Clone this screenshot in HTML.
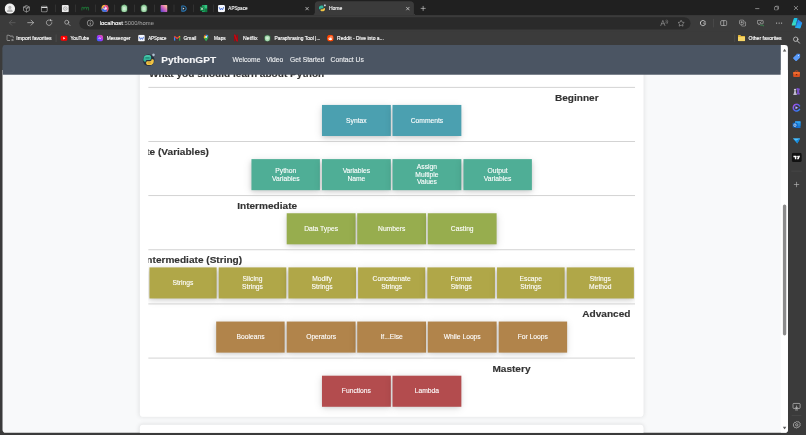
<!DOCTYPE html>
<html><head><meta charset="utf-8"><title>Home</title>
<style>
html,body{margin:0;padding:0;background:#3b3b3b;overflow:hidden;}
body{width:806px;height:435px;position:relative;font-family:"Liberation Sans",sans-serif;}
#w{position:absolute;left:0;top:0;width:1920px;height:1037px;transform:scale(0.41979);transform-origin:0 0;background:#3b3b3b;overflow:hidden;filter:blur(0.55px);}
#w *{box-sizing:border-box;}
.abs{position:absolute;}
/* title bar */
#tb{position:absolute;left:0;top:0;width:1920px;height:36px;background:#202020;}
#tool{position:absolute;left:0;top:35px;width:1920px;height:40px;background:transparent;}
#bm{position:absolute;left:0;top:75px;width:1920px;height:33px;background:#3b3b3b;}
.sep{position:absolute;width:1px;background:#4c4c4c;}
.tabtxt{position:absolute;font-size:12px;color:#f4f4f4;-webkit-text-stroke:0.3px #f4f4f4;white-space:nowrap;line-height:14px;}
.bmt{position:absolute;top:84px;font-size:12px;color:#fff;-webkit-text-stroke:0.35px #fff;white-space:nowrap;line-height:15px;transform-origin:0 50%;}
.ic{position:absolute;}
/* page */
#page{position:absolute;left:6px;top:107px;width:1871px;height:924px;background:linear-gradient(#4b5563 0,#4b5563 60px,#f8f9fa 60px);border-radius:8px;overflow:hidden;}
#nav{position:absolute;left:0;top:0;width:1854px;height:70.5px;background:#4b5563;z-index:5;}
#sb{position:absolute;left:1854px;top:0;width:17px;height:924px;background:#fff;z-index:6;}
.card{position:absolute;left:327px;width:1200px;background:#fff;border-radius:8px;box-shadow:0 0 10px rgba(0,0,0,.1);}
#clip{position:absolute;left:20px;top:0;width:1160px;height:100%;overflow:hidden;}
.hr{position:absolute;left:0;width:1160px;height:2px;background:#cbcbcb;}
.h{position:absolute;font-weight:bold;font-size:22px;color:#333;-webkit-text-stroke:0.35px #333;white-space:nowrap;line-height:28px;transform:scaleX(1.091);transform-origin:0 50%;margin-top:0.6px;}
.b{-webkit-text-stroke:0.25px #fff;position:absolute;height:74.2px;width:163.3px;color:#fff;font-size:16px;line-height:18px;text-align:center;display:flex;align-items:center;justify-content:center;box-shadow:0 4px 10px 0 rgba(0,0,0,.13),0 4px 20px 0 rgba(0,0,0,.12);}
.r4 .b{width:160.7px;}
.navl{-webkit-text-stroke:0.25px #eef0f2;position:absolute;top:25px;font-size:16px;color:#eef0f2;white-space:nowrap;line-height:20px;}
</style></head><body>
<div id="w">
<!-- ===== title bar ===== -->
<div id="tb">
  <!-- avatar -->
  <svg class="ic" style="left:10.5px;top:7.5px" width="25" height="25" viewBox="0 0 24 24"><circle cx="12" cy="12" r="12" fill="#f1f1f1"/><circle cx="12" cy="9.2" r="3.6" fill="#b4b4b4"/><path d="M5.5 18.5c0-3.4 2.9-5 6.500-5s6.500 1.600 6.500 5v1h-13z" fill="#b4b4b4"/></svg>
  <!-- workspaces -->
  <svg class="ic" style="left:53px;top:10.500px" width="20" height="20" viewBox="0 0 20 20" fill="none" stroke="#c4c4c4" stroke-width="1.400" stroke-linejoin="round"><path d="M10 2l7 3.500v8.500l-7 4-7-4V5.500z"/><path d="M3 5.500l7 3.500 7-3.500M10 9v9"/><path d="M6.500 3.800l7 3.500v3" stroke-width="1.100"/></svg>
  <!-- tab actions -->
  <svg class="ic" style="left:96.500px;top:12.500px" width="17" height="17" viewBox="0 0 17 17" fill="none" stroke="#dadada" stroke-width="1.500"><rect x="1.500" y="1.500" width="14" height="14" rx="2.800"/><path d="M1.500 5h14" stroke-width="2.600"/></svg>
  <div class="sep" style="left:132px;top:11px;height:18px"></div>
  <!-- pinned 1 -->
  <svg class="ic" style="left:147px;top:11.500px" width="17" height="17" viewBox="0 0 17 17"><rect width="17" height="17" rx="3" fill="#e9e9e9"/><circle cx="8.500" cy="8.500" r="4.200" fill="none" stroke="#9b9b9b" stroke-width="1.800"/><circle cx="8.500" cy="8.500" r="1.500" fill="#b5b5b5"/></svg>
  <div class="sep" style="left:179.500px;top:11px;height:18px"></div>
  <!-- pinned 2 green glyph -->
  <svg class="ic" style="left:193px;top:14px" width="20" height="12" viewBox="0 0 20 12"><path d="M2 10V5c0-2 3-2.500 4-.5L7 7l1-2.500c1-2 4-2 4.500 0L13 7l1-2.500c1-2 4-1.500 4 .5v5" fill="none" stroke="#1e6b34" stroke-width="2.400" stroke-linecap="round"/></svg>
  <div class="sep" style="left:226.500px;top:11px;height:18px"></div>
  <!-- pinned 3 colourful -->
  <svg class="ic" style="left:241px;top:11px" width="18" height="18" viewBox="0 0 18 18"><circle cx="9" cy="9" r="8.500" fill="#f3b23a"/><path d="M9 .5A8.500 8.500 0 0 1 17.500 9 8.500 8.500 0 0 1 9 17.500z" fill="#e8487f"/><path d="M.5 9A8.500 8.500 0 0 0 9 17.500 8.500 8.500 0 0 0 15 15L9 9z" fill="#3d6fe0"/><circle cx="9.500" cy="8.500" r="3.800" fill="#f6e9f2"/><circle cx="7.500" cy="7" r="2.400" fill="#a04bd6"/></svg>
  <div class="sep" style="left:272.500px;top:11px;height:18px"></div>
  <!-- pinned 4,5 green -->
  <svg class="ic" style="left:286px;top:10px" width="20" height="20" viewBox="0 0 20 20"><rect x="1.500" y=".5" width="17" height="19" rx="7" fill="#3c7e4c" opacity=".5"/><rect x="3.500" y="2" width="13" height="16.500" rx="6" fill="#a5dbae"/><rect x="6.500" y="6.500" width="7" height="8" rx="2.500" fill="#c9ecd0"/><rect x="8" y="1" width="4" height="2.500" rx="1" fill="#7cc58a"/></svg>
  <div class="sep" style="left:320px;top:11px;height:18px"></div>
  <svg class="ic" style="left:333px;top:10px" width="20" height="20" viewBox="0 0 20 20"><rect x="1.500" y=".5" width="17" height="19" rx="7" fill="#3c7e4c" opacity=".5"/><rect x="3.500" y="2" width="13" height="16.500" rx="6" fill="#a5dbae"/><rect x="6.500" y="6.500" width="7" height="8" rx="2.500" fill="#c9ecd0"/><rect x="8" y="1" width="4" height="2.500" rx="1" fill="#7cc58a"/></svg>
  <div class="sep" style="left:367px;top:11px;height:18px"></div>
  <!-- pinned 6 gradient square -->
  <svg class="ic" style="left:381.500px;top:11.500px" width="17" height="17" viewBox="0 0 17 17"><defs><linearGradient id="g6" x1="0" y1="1" x2="1" y2="0"><stop offset="0" stop-color="#3b46c9"/><stop offset=".45" stop-color="#c45ac0"/><stop offset=".75" stop-color="#f3a0a8"/><stop offset="1" stop-color="#f7d27a"/></linearGradient></defs><rect width="17" height="17" rx="2.500" fill="url(#g6)"/></svg>
  <div class="sep" style="left:414px;top:11px;height:18px"></div>
  <!-- pinned 7 D -->
  <svg class="ic" style="left:429px;top:11.500px" width="17" height="17" viewBox="0 0 17 17"><path d="M4 2.500h4.500a6 6 0 0 1 0 12H4z" fill="none" stroke="#2a78b5" stroke-width="2.400" stroke-linejoin="round"/><path d="M6.500 6l4 2.500-4 2.500z" fill="#dff1ff"/></svg>
  <div class="sep" style="left:460.500px;top:11px;height:18px"></div>
  <!-- pinned 8 excel -->
  <svg class="ic" style="left:475.500px;top:11.500px" width="18" height="17" viewBox="0 0 18 17"><rect x="5" y="0" width="13" height="17" rx="1.500" fill="#21a366"/><rect x="11.500" y="0" width="6.500" height="8.500" fill="#33c481"/><rect x="11.500" y="8.500" width="6.500" height="8.500" fill="#107c41"/><rect x="0" y="3.500" width="10.500" height="10.500" rx="1.500" fill="#107c41"/><path d="M3 6l4.500 5.500M7.500 6L3 11.500" stroke="#fff" stroke-width="1.600"/></svg>
  <div class="sep" style="left:508px;top:11px;height:18px"></div>
  <!-- APSpace tab -->
  <svg class="ic" style="left:518.500px;top:11.500px" width="17" height="17" viewBox="0 0 17 17"><rect width="17" height="17" rx="3.500" fill="#f4f6fb"/><path d="M3.500 6l2.500 5.500 2.500-4 2.500 4L13.500 6" fill="none" stroke="#3f6ad8" stroke-width="2.200" stroke-linejoin="round" stroke-linecap="round"/></svg>
  <div class="tabtxt" style="left:544px;top:13.5px;transform:scaleX(.91);transform-origin:0 50%;">APSpace</div>
  <svg class="ic" style="left:726px;top:14.500px" width="11" height="11" viewBox="0 0 11 11"><path d="M1.500 1.500l8 8M9.500 1.500l-8 8" stroke="#f0f0f0" stroke-width="1.500"/></svg>
  <!-- active tab -->
  <div class="abs" style="left:750px;top:3px;width:236px;height:33px;background:#3b3b3b;border-radius:9px 9px 0 0;"></div>
  <div class="abs" style="left:742px;top:28px;width:8px;height:8px;background:radial-gradient(circle at 0 0,transparent 8px,#3b3b3b 8.500px);"></div>
  <div class="abs" style="left:986px;top:28px;width:8px;height:8px;background:radial-gradient(circle at 100% 0,transparent 8px,#3b3b3b 8.500px);"></div>
  <svg class="ic" style="left:756.500px;top:10px" width="20" height="20" viewBox="-2.500 -2.500 34 34"><circle cx="14.500" cy="14.500" r="14" fill="#2b323c" opacity=".7"/><path d="M2 13C2 6 6 2.500 12 2.500h3c3 0 5.500 2 5.500 4.500v4c0 2-1.500 3.500-3.500 3.500h-6c-2 0-3.500 1.500-3.500 3.500v.5H6C3.500 18.500 2 16 2 13z" fill="#35b59a"/><path d="M27 16c0 7-4 10.500-10 10.500h-3c-3 0-5.500-2-5.500-4.500v-1c0-2 1.500-3.500 3.500-3.500h6c2 0 3.500-1.500 3.500-3.500v-1.500H23c2.500 0 4 1 4 3.500z" fill="#f2c545"/><circle cx="26.200" cy="2.200" r="4.200" fill="#c4d0de"/></svg>
  <div class="tabtxt" style="left:783.500px;top:13.5px;color:#f2f2f2">Home</div>
  <svg class="ic" style="left:965.500px;top:14.500px" width="11" height="11" viewBox="0 0 11 11"><path d="M1.500 1.500l8 8M9.500 1.500l-8 8" stroke="#f0f0f0" stroke-width="1.500"/></svg>
  <!-- new tab -->
  <svg class="ic" style="left:1000.500px;top:12.500px" width="14" height="14" viewBox="0 0 14 14"><path d="M7 1v12M1 7h12" stroke="#dcdcdc" stroke-width="1.400"/></svg>
  <!-- window controls -->
  <svg class="ic" style="left:1798px;top:14px" width="12" height="12" viewBox="0 0 12 12"><path d="M1 6.500h10" stroke="#e6e6e6" stroke-width="1.200"/></svg>
  <svg class="ic" style="left:1844px;top:13px" width="12" height="12" viewBox="0 0 12 12" fill="none" stroke="#e6e6e6" stroke-width="1.100"><rect x="1" y="3" width="8" height="8" rx="1.500"/><path d="M3.500 3V2.500A1.500 1.500 0 0 1 5 1h4.500A1.500 1.500 0 0 1 11 2.500V7a1.500 1.500 0 0 1-1.500 1.500H9"/></svg>
  <svg class="ic" style="left:1890px;top:13px" width="12" height="12" viewBox="0 0 12 12"><path d="M1 1l10 10M11 1L1 11" stroke="#e6e6e6" stroke-width="1.200"/></svg>
</div>
<!-- ===== toolbar ===== -->
<div id="tool">
  <svg class="ic" style="left:19.500px;top:10px" width="18" height="18" viewBox="0 0 18 18" fill="none" stroke="#6a6a6a" stroke-width="1.500" stroke-linecap="round" stroke-linejoin="round"><path d="M16 9H2.500M8 3L2 9l6 6"/></svg>
  <svg class="ic" style="left:64px;top:10px" width="18" height="18" viewBox="0 0 18 18" fill="none" stroke="#d8d8d8" stroke-width="1.500" stroke-linecap="round" stroke-linejoin="round"><path d="M2 9h13.500M10 3l6 6-6 6"/></svg>
  <svg class="ic" style="left:107.500px;top:10px" width="18" height="18" viewBox="0 0 18 18" fill="none" stroke="#d8d8d8" stroke-width="1.500" stroke-linecap="round" stroke-linejoin="round"><path d="M15.500 9A6.500 6.500 0 1 1 12.800 3.700"/><path d="M12.500 1v3.500H16" /></svg>
  <svg class="ic" style="left:152px;top:11px" width="17" height="17" viewBox="0 0 17 17" fill="none" stroke="#cfcfcf" stroke-width="1.500" stroke-linecap="round"><circle cx="7" cy="7" r="4.800"/><path d="M10.600 10.600L15 15"/></svg>
  <!-- address pill -->
  <div class="abs" style="left:189px;top:5.500px;width:1456px;height:29.500px;border-radius:15px;background:#2a2a2a;"></div>
  <svg class="ic" style="left:205.500px;top:10.500px" width="18" height="18" viewBox="0 0 18 18" fill="none" stroke="#dcdcdc" stroke-width="1.300"><circle cx="9" cy="9" r="7.200"/><path d="M9 8v5" stroke-width="1.500"/><circle cx="9" cy="5.500" r=".9" fill="#dcdcdc" stroke="none"/></svg>
  <div class="abs" style="left:237.500px;top:11px;font-size:14px;line-height:17px;color:#fff;-webkit-text-stroke:0.3px #fff;white-space:nowrap;">localhost<span style="color:#9a9a9a;-webkit-text-stroke:0.2px #9a9a9a">:5000/home</span></div>
  <!-- read aloud -->
  <svg class="ic" style="left:1572px;top:10px" width="22" height="19" viewBox="0 0 22 19" fill="none" stroke="#a0a0a0" stroke-width="1.400" stroke-linecap="round" stroke-linejoin="round"><path d="M2 16L7 3.500 12 16M3.800 11.500h6.400"/><path d="M14.500 4.500a3.500 3.500 0 0 1 0 5" stroke-width="1.200"/><path d="M17 2.500a6.500 6.500 0 0 1 0 9" stroke-width="1.200"/></svg>
  <!-- star -->
  <svg class="ic" style="left:1613px;top:10.500px" width="19" height="19" viewBox="0 0 20 20" fill="none" stroke="#a8a8a8" stroke-width="1.400" stroke-linejoin="round"><path d="M10 2.200l2.400 5 5.400.7-3.900 3.800.9 5.500L10 14.600l-4.800 2.600.9-5.500L2.200 7.900l5.400-.7z"/></svg>
  <!-- extension / refresh-like -->
  <svg class="ic" style="left:1666px;top:10.500px" width="18" height="18" viewBox="0 0 20 20" fill="none" stroke="#e2e2e2" stroke-width="2.200" stroke-linecap="round"><path d="M15.800 6.500A7 7 0 1 0 16 13"/><path d="M11 10h5.500" stroke-width="2"/></svg>
  <div class="sep" style="left:1699px;top:10px;height:20px;background:#5c5c5c"></div>
  <!-- split screen -->
  <svg class="ic" style="left:1714.500px;top:10.500px" width="18" height="18" viewBox="0 0 20 20" fill="none" stroke="#dedede" stroke-width="1.500"><rect x="2" y="3.500" width="16" height="13" rx="3"/><path d="M10 3.500v13"/></svg>
  <!-- collections -->
  <svg class="ic" style="left:1759.500px;top:10.500px" width="18" height="18" viewBox="0 0 21 21" fill="none" stroke="#dedede" stroke-width="1.400"><rect x="2" y="2" width="12" height="12" rx="3"/><path d="M16.500 6.500a3 3 0 0 1 2.500 3V16a3 3 0 0 1-3 3H9.500a3 3 0 0 1-3-2.500"/><path d="M8 5v6M5 8h6"/></svg>
  <!-- feedback -->
  <svg class="ic" style="left:1802.500px;top:10.500px" width="18" height="18" viewBox="0 0 21 21" fill="none" stroke-width="1.400"><path d="M3 3h13a1.500 1.500 0 0 1 1.500 1.500V11a1.500 1.500 0 0 1-1.500 1.500H9l-3.500 3v-3H3A1.500 1.500 0 0 1 1.500 11V4.500A1.500 1.500 0 0 1 3 3z" stroke="#dedede"/><path d="M7.500 7.500l2 2 3.500-3.500" stroke="#dedede"/><path d="M9.500 16.500h6l3 2.500v-2.500" stroke="#3aa655" stroke-width="1.800"/></svg>
  <!-- dots -->
  <svg class="ic" style="left:1847px;top:17px" width="18" height="6" viewBox="0 0 18 6"><circle cx="3" cy="3" r="1.400" fill="#d0d0d0"/><circle cx="9" cy="3" r="1.400" fill="#d0d0d0"/><circle cx="15" cy="3" r="1.400" fill="#d0d0d0"/></svg>
  <!-- copilot -->
  <svg class="ic" style="left:1884px;top:4.500px" width="29" height="29" viewBox="0 0 29 29"><defs><linearGradient id="cp1" x1="0" y1="0" x2="0" y2="1"><stop offset="0" stop-color="#19c0e8"/><stop offset="1" stop-color="#3fe0b8"/></linearGradient><linearGradient id="cp2" x1="0" y1="0" x2="0" y2="1"><stop offset="0" stop-color="#2a7bf0"/><stop offset="1" stop-color="#22b4f2"/></linearGradient></defs><path d="M17 8l8.500 6.500-4 12-10.500-2z" fill="url(#cp2)" stroke="url(#cp2)" stroke-width="3" stroke-linejoin="round"/><path d="M8.500 4.500h6L10 19.500H3.500z" fill="url(#cp1)" stroke="url(#cp1)" stroke-width="3" stroke-linejoin="round"/><path d="M17 4.500L11.500 23" stroke="#1b4f9c" stroke-width="1.600" stroke-linecap="round"/></svg>
</div>
<!-- ===== bookmarks bar ===== -->
<div id="bm">
  <svg class="ic" style="left:14.500px;top:7px" width="18" height="17" viewBox="0 0 18 17" fill="none" stroke="#d4d4d4" stroke-width="1.400" stroke-linejoin="round"><path d="M1.500 13V3a1.500 1.500 0 0 1 1.500-1.500h3.500L8.500 4H15a1.500 1.500 0 0 1 1.500 1.500V9"/><path d="M1.500 13a1.500 1.500 0 0 0 1.500 1.500h6"/><path d="M11.500 13.500h5M14.500 11l2.500 2.500-2.500 2.500" stroke-width="1.300"/></svg>
</div>
<div class="bmt" style="left:39px;transform:scaleX(1.013);">Import favorites</div>
<div class="sep" style="left:133px;top:82px;height:18px;background:#5c5c5c"></div>
<!-- youtube -->
<svg class="ic" style="left:144px;top:83.500px" width="17" height="14" viewBox="0 0 17 14"><rect x="0" y="1" width="17" height="12" rx="3.500" fill="#f00"/><path d="M6.800 4.200v5.600L11.500 7z" fill="#fff"/></svg>
<div class="bmt" style="left:168.400px;transform:scaleX(0.94);">YouTube</div>
<!-- messenger -->
<svg class="ic" style="left:230px;top:82.500px" width="16" height="16" viewBox="0 0 16 16"><defs><linearGradient id="ms" x1="0" y1="1" x2="1" y2="0"><stop offset="0" stop-color="#0a7cff"/><stop offset=".5" stop-color="#a033ff"/><stop offset="1" stop-color="#ff5c87"/></linearGradient></defs><circle cx="8" cy="8" r="8" fill="url(#ms)"/><path d="M3.500 10l3-4 2 2 3.500-2-3 4-2-2z" fill="#fff"/></svg>
<div class="bmt" style="left:254.200px;transform:scaleX(0.955);">Messenger</div>
<!-- apspace -->
<svg class="ic" style="left:328.500px;top:82.500px" width="16" height="16" viewBox="0 0 17 17"><rect width="17" height="17" rx="3.500" fill="#f4f6fb"/><path d="M3.500 6l2.500 5.500 2.500-4 2.500 4L13.500 6" fill="none" stroke="#3f6ad8" stroke-width="2.200" stroke-linejoin="round" stroke-linecap="round"/></svg>
<div class="bmt" style="left:352.800px;transform:scaleX(0.87);">APSpace</div>
<!-- gmail -->
<svg class="ic" style="left:413.500px;top:84.500px" width="16" height="12" viewBox="0 0 16 12"><path d="M0 1.500V12h3.500V5z" fill="#4285f4"/><path d="M16 1.500V12h-3.500V5z" fill="#34a853"/><path d="M0 1.500C0 0 1.800-.5 3 .5L8 4.500 13 .5c1.200-1 3-.5 3 1L12.500 5 8 8.500 3.500 5z" fill="#ea4335"/><path d="M12.500 5L16 1.500c0-1.500-1.800-2-3-1z" fill="#fbbc04"/></svg>
<div class="bmt" style="left:437.400px;transform:scaleX(0.98);">Gmail</div>
<!-- maps -->
<svg class="ic" style="left:484.500px;top:82px" width="12" height="17" viewBox="0 0 12 17"><path d="M6 0a6 6 0 0 1 6 6c0 3.500-4 6-6 11C4 12 0 9.500 0 6a6 6 0 0 1 6-6z" fill="#34a853"/><path d="M6 0a6 6 0 0 1 5.200 3L6 9z" fill="#4285f4"/><path d="M.8 3A6 6 0 0 1 6 0l-2 6z" fill="#ea4335"/><path d="M0 6c0 1.500.7 2.800 1.600 4L6 6 3 3.500z" fill="#fbbc04"/><circle cx="6" cy="6" r="2.200" fill="#fff"/></svg>
<div class="bmt" style="left:509.500px;transform:scaleX(0.945);">Maps</div>
<!-- netflix -->
<svg class="ic" style="left:557px;top:82px" width="10" height="17" viewBox="0 0 10 17"><path d="M0 0h3.200L10 17H6.800z" fill="#c80812"/><path d="M0 0h3.200v17H0zM6.800 0H10v17H6.800z" fill="#a3060e"/><path d="M0 0h3.200L10 17H6.800z" fill="#c80812"/></svg>
<div class="bmt" style="left:578.600px;transform:scaleX(1.03);">Netflix</div>
<!-- paraphrasing -->
<svg class="ic" style="left:626.500px;top:80.500px" width="20" height="20" viewBox="0 0 20 20"><rect x="2" y="2" width="16" height="16" rx="6" fill="#3c7e4c" opacity=".55"/><rect x="4" y="3.500" width="12" height="13.500" rx="5" fill="#a9dcb2"/><rect x="7" y="7" width="6" height="6" rx="2" fill="#d3f0d8"/></svg>
<div class="bmt" style="left:653.600px;transform:scaleX(0.968);">Paraphrasing Tool |...</div>
<!-- reddit -->
<svg class="ic" style="left:778.500px;top:82.500px" width="16" height="16" viewBox="0 0 16 16"><circle cx="8" cy="8" r="8" fill="#ff4500"/><ellipse cx="8" cy="9.500" rx="4.800" ry="3.300" fill="#fff"/><circle cx="6" cy="9" r=".9" fill="#ff4500"/><circle cx="10" cy="9" r=".9" fill="#ff4500"/><circle cx="12.300" cy="5" r="1.100" fill="#fff"/><path d="M8 6l.8-3 3 .8" stroke="#fff" stroke-width=".8" fill="none"/></svg>
<div class="bmt" style="left:802.500px;transform:scaleX(0.993);">Reddit - Dive into a...</div>
<!-- other favorites -->
<div class="sep" style="left:1750px;top:82px;height:18px;background:#5c5c5c"></div>
<svg class="ic" style="left:1758px;top:83px" width="17" height="15" viewBox="0 0 17 15"><path d="M0 2a1.500 1.500 0 0 1 1.500-1.500h4l2 2H15.500A1.500 1.500 0 0 1 17 4v9.500A1.500 1.500 0 0 1 15.500 15h-14A1.500 1.500 0 0 1 0 13.500z" fill="#e6b93c"/><path d="M0 5h17v8.500a1.500 1.500 0 0 1-1.500 1.500h-14A1.500 1.500 0 0 1 0 13.500z" fill="#f7d667"/></svg>
<div class="bmt" style="left:1783px;">Other favorites</div>
<div id="page">
<div class="card" style="top:31px;height:855px;"><div id="clip">
<div class="h" style="left:2px;top:23.4px;">What you should learn about Python</div>
<div class="hr" style="top:69.2px"></div>
<div class="h" style="left:968.8px;top:80.1px;">Beginner</div>
<div class="row">
<div class="b" style="left:414.30px;top:111.9px;background:#4ba0b0">Syntax</div>
<div class="b" style="left:582.40px;top:111.9px;background:#4ba0b0">Comments</div>
</div>
<div class="hr" style="top:198.2px"></div>
<div class="h" style="left:-126.0px;top:209.1px;">Intermediate (Variables)</div>
<div class="row">
<div class="b" style="left:246.20px;top:240.9px;background:#4fae96">Python<br>Variables</div>
<div class="b" style="left:414.30px;top:240.9px;background:#4fae96">Variables<br>Name</div>
<div class="b" style="left:582.40px;top:240.9px;background:#4fae96">Assign<br>Multiple<br>Values</div>
<div class="b" style="left:750.50px;top:240.9px;background:#4fae96">Output<br>Variables</div>
</div>
<div class="hr" style="top:327.2px"></div>
<div class="h" style="left:212.3px;top:338.1px;">Intermediate</div>
<div class="row">
<div class="b" style="left:330.25px;top:369.9px;background:#97ad4e">Data Types</div>
<div class="b" style="left:498.35px;top:369.9px;background:#97ad4e">Numbers</div>
<div class="b" style="left:666.45px;top:369.9px;background:#97ad4e">Casting</div>
</div>
<div class="hr" style="top:456.2px"></div>
<div class="h" style="left:-11.5px;top:467.1px;">Intermediate (String)</div>
<div class="row r4">
<div class="b" style="left:2.50px;top:498.9px;background:#b0a748">Strings</div>
<div class="b" style="left:168.20px;top:498.9px;background:#b0a748">Slicing<br>Strings</div>
<div class="b" style="left:333.90px;top:498.9px;background:#b0a748">Modify<br>Strings</div>
<div class="b" style="left:499.60px;top:498.9px;background:#b0a748">Concatenate<br>Strings</div>
<div class="b" style="left:665.30px;top:498.9px;background:#b0a748">Format<br>Strings</div>
<div class="b" style="left:831.00px;top:498.9px;background:#b0a748">Escape<br>Strings</div>
<div class="b" style="left:996.70px;top:498.9px;background:#b0a748">Strings<br>Method</div>
</div>
<div class="hr" style="top:585.2px"></div>
<div class="h" style="left:1034.3px;top:596.1px;">Advanced</div>
<div class="row">
<div class="b" style="left:162.15px;top:627.9px;background:#b1844b">Booleans</div>
<div class="b" style="left:330.25px;top:627.9px;background:#b1844b">Operators</div>
<div class="b" style="left:498.35px;top:627.9px;background:#b1844b">If...Else</div>
<div class="b" style="left:666.45px;top:627.9px;background:#b1844b">While Loops</div>
<div class="b" style="left:834.55px;top:627.9px;background:#b1844b">For Loops</div>
</div>
<div class="hr" style="top:714.2px"></div>
<div class="h" style="left:820.2px;top:725.1px;">Mastery</div>
<div class="row">
<div class="b" style="left:414.30px;top:756.9px;background:#b34c4e">Functions</div>
<div class="b" style="left:582.40px;top:756.9px;background:#b34c4e">Lambda</div>
</div>
</div></div>
<div class="card" style="top:905px;height:60px;"></div>
<div id="nav">
  <!-- logo -->
  <svg class="ic" style="left:330.5px;top:19.2px" width="34" height="34" viewBox="-2.500 -2.500 34 34"><circle cx="14.500" cy="14.500" r="14" fill="#27303c"/><path d="M2 13C2 6 6 2.500 12 2.500h3c3 0 5.500 2 5.500 4.500v4c0 2-1.500 3.500-3.500 3.500h-6c-2 0-3.500 1.500-3.500 3.500v.5H6C3.500 18.500 2 16 2 13z" fill="#35b59a"/><path d="M4 8C5.500 4.500 8 3 12 3h3c2.500 0 4.500 1.500 4.500 3.500H10c-2.500 0-4.500.5-6 1.500z" fill="#4fd0b0" opacity=".8"/><path d="M8 9.500h7.500" stroke="#1d6f63" stroke-width="2" stroke-linecap="round"/><path d="M27 16c0 7-4 10.500-10 10.500h-3c-3 0-5.500-2-5.500-4.500v-1c0-2 1.500-3.500 3.500-3.500h6c2 0 3.500-1.500 3.500-3.500v-1.500H23c2.500 0 4 1 4 3.500z" fill="#f2c545"/><path d="M13.500 21.500h6" stroke="#b98a22" stroke-width="1.800" stroke-linecap="round"/><circle cx="26.200" cy="2.200" r="3.900" fill="#b4c3d4" stroke="#3a4452" stroke-width="1.200"/></svg>
  <div class="abs" style="left:377.5px;top:22.6px;font-size:22px;font-weight:bold;color:#f4f5f7;-webkit-text-stroke:0.3px #f4f5f7;line-height:28px;white-space:nowrap;transform:scaleX(1.091);transform-origin:0 50%;">PythonGPT</div>
  <div class="navl" style="left:548px;">Welcome</div>
  <div class="navl" style="left:628px;">Video</div>
  <div class="navl" style="left:685px;">Get Started</div>
  <div class="navl" style="left:781.5px;">Contact Us</div>
</div>
<div id="sb">
  <svg class="ic" style="left:3.500px;top:8.5px" width="10" height="7" viewBox="0 0 9 7"><path d="M4.500 0L9 7H0z" fill="#606060"/></svg>
  <div class="abs" style="left:4.500px;top:379.5px;width:8.500px;height:312px;border-radius:4.500px;background:#8c8c8c;"></div>
  <svg class="ic" style="left:3.500px;top:909px" width="10" height="7" viewBox="0 0 9 7"><path d="M0 0h9L4.500 7z" fill="#606060"/></svg>
</div>
</div>
<!-- ===== sidebar icons ===== -->
<svg class="ic" style="left:1888px;top:85.500px" width="19" height="19" viewBox="0 0 19 19" fill="none" stroke="#e0e0e0" stroke-width="1.700" stroke-linecap="round"><circle cx="7.500" cy="7.500" r="5.300"/><path d="M11.500 11.500L17 17" stroke-width="2"/></svg>
<!-- tag -->
<svg class="ic" style="left:1887px;top:126px" width="21" height="21" viewBox="0 0 21 21"><path d="M11 2h6a2 2 0 0 1 2 2v6a2 2 0 0 1-.6 1.400l-7.500 7.500a2 2 0 0 1-2.800 0l-5-5a2 2 0 0 1 0-2.800l7.500-7.500A2 2 0 0 1 11 2z" fill="#4a8df0"/><path d="M3.100 11.100l7.500-7.500L18.400 11.400l-7.500 7.500a2 2 0 0 1-2.800 0l-5-5a2 2 0 0 1 0-2.800z" fill="#6aa8ff" opacity=".55"/><circle cx="15" cy="6" r="1.300" fill="#dbe9ff"/></svg>
<!-- briefcase -->
<svg class="ic" style="left:1888px;top:167px" width="19" height="18" viewBox="0 0 21 20"><path d="M7 5V3.500A1.500 1.500 0 0 1 8.500 2h4A1.500 1.500 0 0 1 14 3.500V5" fill="none" stroke="#d9501f" stroke-width="2"/><rect x="1.500" y="5" width="18" height="13" rx="2.500" fill="#d9501f"/><path d="M1.500 7.500c0 3 4 4.500 9 4.500s9-1.500 9-4.500V7a2 2 0 0 0-2-2h-14a2 2 0 0 0-2 2z" fill="#ee6a2e"/><rect x="8.500" y="10" width="4" height="3.500" rx=".7" fill="#7a2a10"/></svg>
<!-- chess -->
<svg class="ic" style="left:1888px;top:207px" width="19" height="20" viewBox="0 0 21 22"><path d="M12 3h2v2h1.500V3h2v2H19V8l-1.500 1.500v6L19 17v3h-8.500v-3l1.500-1.500v-6L10.500 8V3z" fill="#7c52cf"/><circle cx="6.500" cy="7.500" r="3" fill="#cfcbd8"/><path d="M4.500 10.500h4L10 18l1 1v2H2v-2l1-1z" fill="#bdb9c9"/></svg>
<!-- m365 -->
<svg class="ic" style="left:1887px;top:245.500px" width="21" height="21" viewBox="0 0 21 21"><defs><linearGradient id="m3" x1="0" y1="0" x2="1" y2="1"><stop offset="0" stop-color="#b455ee"/><stop offset=".5" stop-color="#5a5cf0"/><stop offset="1" stop-color="#2b8cf2"/></linearGradient></defs><path d="M17.500 6.500A8 8 0 1 0 17.500 14.500" fill="none" stroke="url(#m3)" stroke-width="3.600" stroke-linecap="round"/><path d="M8 6.500l7 4-7 4z" fill="#7d6cf5"/><path d="M8.500 8l4 2.500-4 2.500z" fill="#d8d4ff"/></svg>
<!-- outlook -->
<svg class="ic" style="left:1887px;top:286.500px" width="21" height="21" viewBox="0 0 21 21"><rect x="7" y="2" width="13" height="16" rx="1.500" fill="#1a73d1"/><rect x="7" y="2" width="13" height="5.500" fill="#35a6f2"/><rect x="13.500" y="7.500" width="6.500" height="5" fill="#1a8fe3"/><rect x="1" y="5.500" width="11.500" height="11.500" rx="1.500" fill="#0f62c0"/><ellipse cx="6.700" cy="11.200" rx="2.700" ry="3.200" fill="none" stroke="#fff" stroke-width="1.600"/></svg>
<!-- paper plane -->
<svg class="ic" style="left:1888px;top:328px" width="19" height="15" viewBox="0 0 22 17"><path d="M1 2h20L13 16z" fill="#1ea0ee"/><path d="M1 2h20L10 8.500z" fill="#53c3ff"/><path d="M10 8.500L21 2 13 16z" fill="#1785d6"/></svg>
<!-- TV -->
<svg class="ic" style="left:1885.500px;top:364px" width="24" height="22" viewBox="0 0 24 22"><rect width="24" height="22" rx="4.500" fill="#121212"/><path d="M4 7h7v8.500H7.500v-5H4z" fill="#fff"/><circle cx="13" cy="8.800" r="1.700" fill="#fff"/><path d="M15.800 7H20l-3.500 8.500h-4z" fill="#fff"/></svg>
<div class="abs" style="left:1885px;top:407px;width:25px;height:1px;background:#555"></div>
<svg class="ic" style="left:1890px;top:432px" width="15" height="15" viewBox="0 0 15 15"><path d="M7.500 1v13M1 7.500h13" stroke="#bdbdbd" stroke-width="1.500"/></svg>
<!-- bottom: screen icon -->
<svg class="ic" style="left:1887px;top:958px" width="21" height="21" viewBox="0 0 21 21" fill="none" stroke="#d2d2d2" stroke-width="1.500" stroke-linejoin="round"><rect x="2" y="3" width="17" height="12" rx="2"/><path d="M7 18.500h7M10.500 8v7M8 12l2.500 3 2.500-3"/></svg>
<div class="abs" style="left:1886px;top:989px;width:23px;height:1px;background:#565656"></div>
<!-- gear -->
<svg class="ic" style="left:1887.500px;top:1002px" width="20" height="20" viewBox="0 0 20 20" fill="none" stroke="#d2d2d2" stroke-width="1.500" stroke-linejoin="round"><path d="M10 1.800l2.200 1.500 2.700-.3 1.100 2.400 2.300 1.400-.6 2.600.6 2.600-2.300 1.400-1.100 2.400-2.700-.3L10 18.200l-2.200-1.500-2.700.3L4 14.600l-2.300-1.400.6-2.600-.6-2.600L4 6.600l1.100-2.400 2.700.3z" transform="translate(0 -.2) scale(1)"/><circle cx="10" cy="10" r="2.800"/></svg>
</div>
</body></html>
